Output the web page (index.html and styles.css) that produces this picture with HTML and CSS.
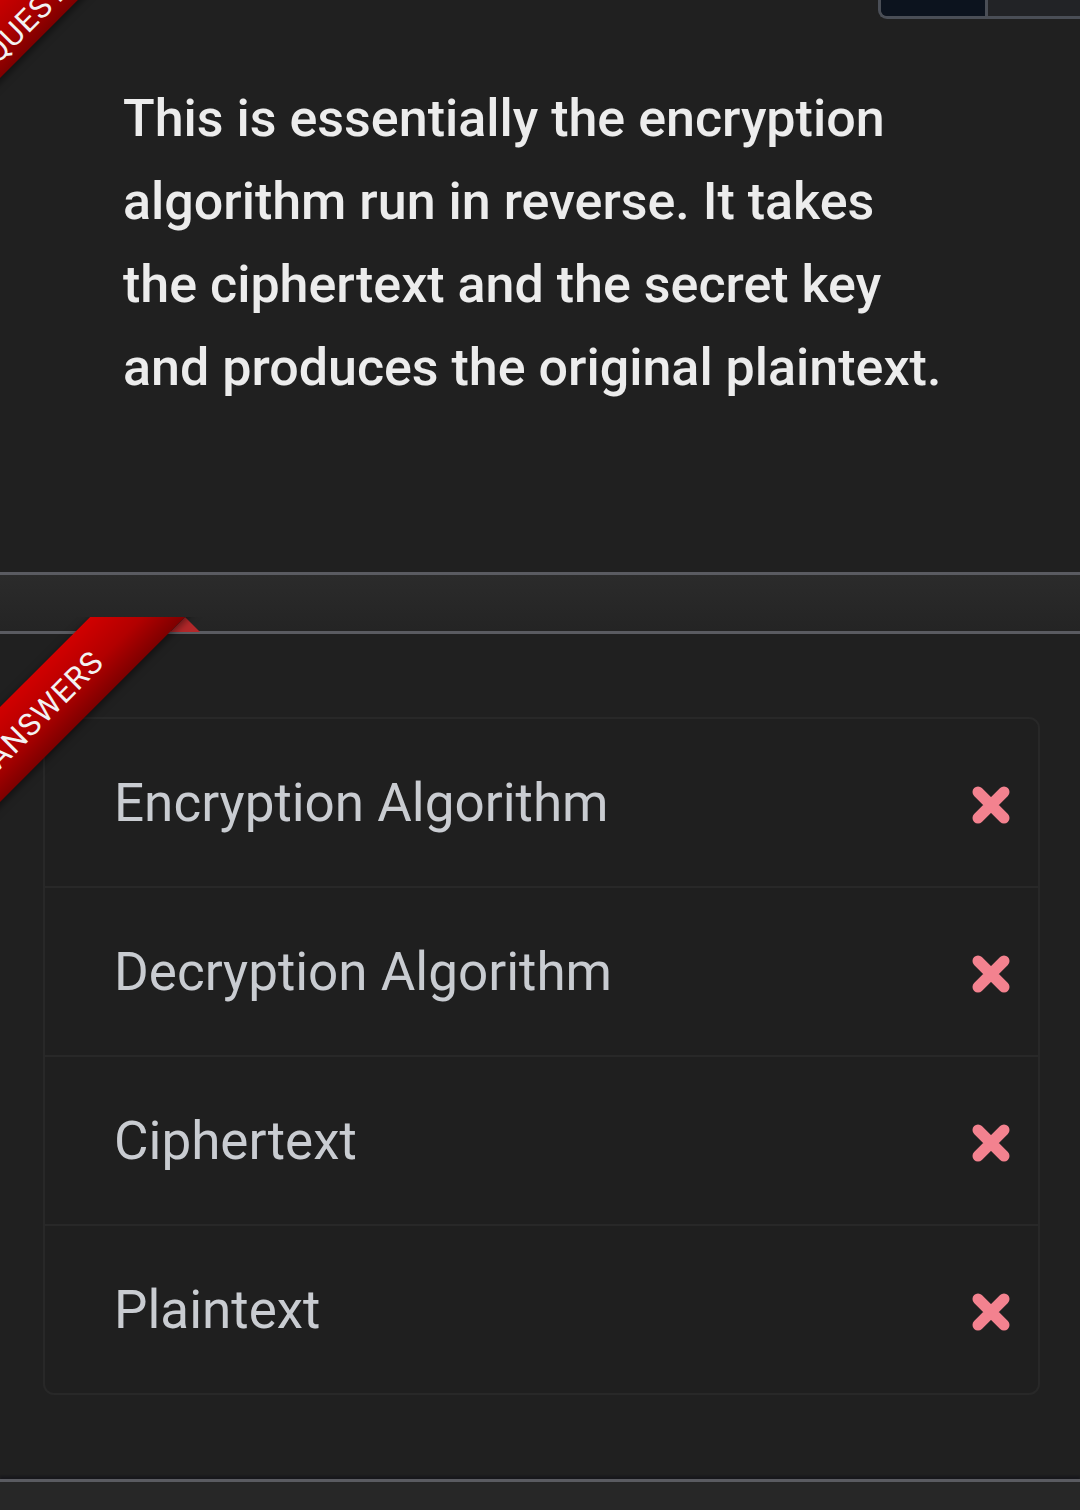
FILE: index.html
```html
<!DOCTYPE html>
<html lang="en">
<head>
<meta charset="utf-8">
<title>Question</title>
<link rel="stylesheet" href="styles.css">
</head>
<body>
<div class="page">
  <div class="tabs">
    <div class="tab-group">
      <span class="tab tab-active"></span>
      <span class="tab"></span>
    </div>
  </div>

  <section class="question">
    <div class="ribbon ribbon-q">
      <span class="fold"></span>
      <div class="band"><span class="band-text">QUESTION</span></div>
    </div>
    <p class="question-text">This is essentially the encryption algorithm run in reverse. It takes the ciphertext and the secret key and produces the original plaintext.</p>
  </section>

  <div class="divider"></div>

  <section class="answers">
    <div class="ribbon ribbon-a">
      <span class="fold"></span>
      <div class="band"><span class="band-text">ANSWERS</span></div>
    </div>
    <ul class="answer-list">
      <li class="answer"><span class="answer-text">Encryption Algorithm</span><svg class="xmark" viewBox="0 0 38 38"><path d="M6 6 L32 32 M32 6 L6 32"/></svg></li>
      <li class="answer"><span class="answer-text">Decryption Algorithm</span><svg class="xmark" viewBox="0 0 38 38"><path d="M6 6 L32 32 M32 6 L6 32"/></svg></li>
      <li class="answer"><span class="answer-text">Ciphertext</span><svg class="xmark" viewBox="0 0 38 38"><path d="M6 6 L32 32 M32 6 L6 32"/></svg></li>
      <li class="answer"><span class="answer-text">Plaintext</span><svg class="xmark" viewBox="0 0 38 38"><path d="M6 6 L32 32 M32 6 L6 32"/></svg></li>
    </ul>
  </section>

  <div class="divider divider-bottom"></div>
</div>
</body>
</html>
```

FILE: styles.css
```css
html, body {
  margin: 0;
  padding: 0;
  background: #202020;
}

body {
  font-family: Roboto, "Open Sans", "Liberation Sans", sans-serif;
  overflow: hidden;
}

.page {
  width: 1080px;
  min-height: 1510px;
  background: #202020;
}

/* top tabs */
.tabs {
  display: flex;
  justify-content: flex-end;
  height: 19px;
}

.tab-group {
  display: flex;
  width: 199px;
  border-left: 3px solid #4a4e56;
  border-bottom: 3px solid #4a4e56;
  border-bottom-left-radius: 9px;
  overflow: hidden;
}

.tab {
  display: block;
  height: 16px;
}

.tab-active {
  width: 104px;
  background: #0c131e;
  border-right: 3px solid #4a4e56;
}

.tab + .tab {
  flex: 1;
  background: #222326;
}

/* question */
.question {
  position: relative;
  padding: 58px 123px 163px;
}

.question-text {
  margin: 0;
  font-size: 52px;
  line-height: 83px;
  color: #ececec;
  font-weight: 500;
}

/* dividers */
.divider {
  height: 56px;
  border-top: 3px solid #5a5b61;
  border-bottom: 3px solid #5a5b61;
  background: linear-gradient(to bottom, #2b2b2b, #242424);
}

.divider-bottom {
  border-bottom: none;
  height: 40px;
  background: #272727;
  box-shadow: 0 -3px 2px rgba(10, 10, 20, 0.35);
}

/* answers */
.answers {
  position: relative;
  padding: 83px 40px 84px 43px;
}

.answer-list {
  list-style: none;
  margin: 0;
  padding: 0;
  border: 2px solid #282828;
  border-radius: 11px;
  background: #1f1f1f;
}

.answer {
  display: flex;
  align-items: center;
  justify-content: space-between;
  height: 167px;
  padding: 0 28px 0 69px;
}

.answer + .answer {
  border-top: 2px solid #282828;
}

.answer-text {
  font-size: 53px;
  color: #c9ccd1;
  font-weight: 400;
}

.xmark {
  width: 38px;
  height: 38px;
  margin-top: 4px;
}

.xmark path {
  stroke: #f3828f;
  stroke-width: 11;
  stroke-linecap: round;
  fill: none;
}

/* ribbons */
.ribbon {
  position: absolute;
  left: 0;
  width: 210px;
  height: 210px;
  overflow: hidden;
  pointer-events: none;
}

.ribbon-a {
  top: -17px;
}

.ribbon-q {
  top: -126px;
}

.fold {
  position: absolute;
  left: 170px;
  top: 0;
  width: 0;
  height: 0;
  border-left: 15px solid transparent;
  border-right: 15px solid transparent;
  border-bottom: 15px solid #b3282a;
}

.band {
  position: absolute;
  left: -81px;
  top: 35px;
  width: 300px;
  height: 67px;
  transform: rotate(-45deg);
  background: linear-gradient(to bottom, #d10000, #b20000 55%, #7e0000);
  box-shadow: 0 2px 9px rgba(0, 0, 0, 0.55);
  display: flex;
  align-items: center;
  justify-content: center;
}

.band-text {
  font-size: 31px;
  color: #f2f2f2;
  letter-spacing: 1px;
  line-height: 1;
}

.ribbon-a .band-text {
  transform: translateX(-34px);
}

.ribbon-q .band-text {
  transform: translate(-46px, 12px);
}
```
